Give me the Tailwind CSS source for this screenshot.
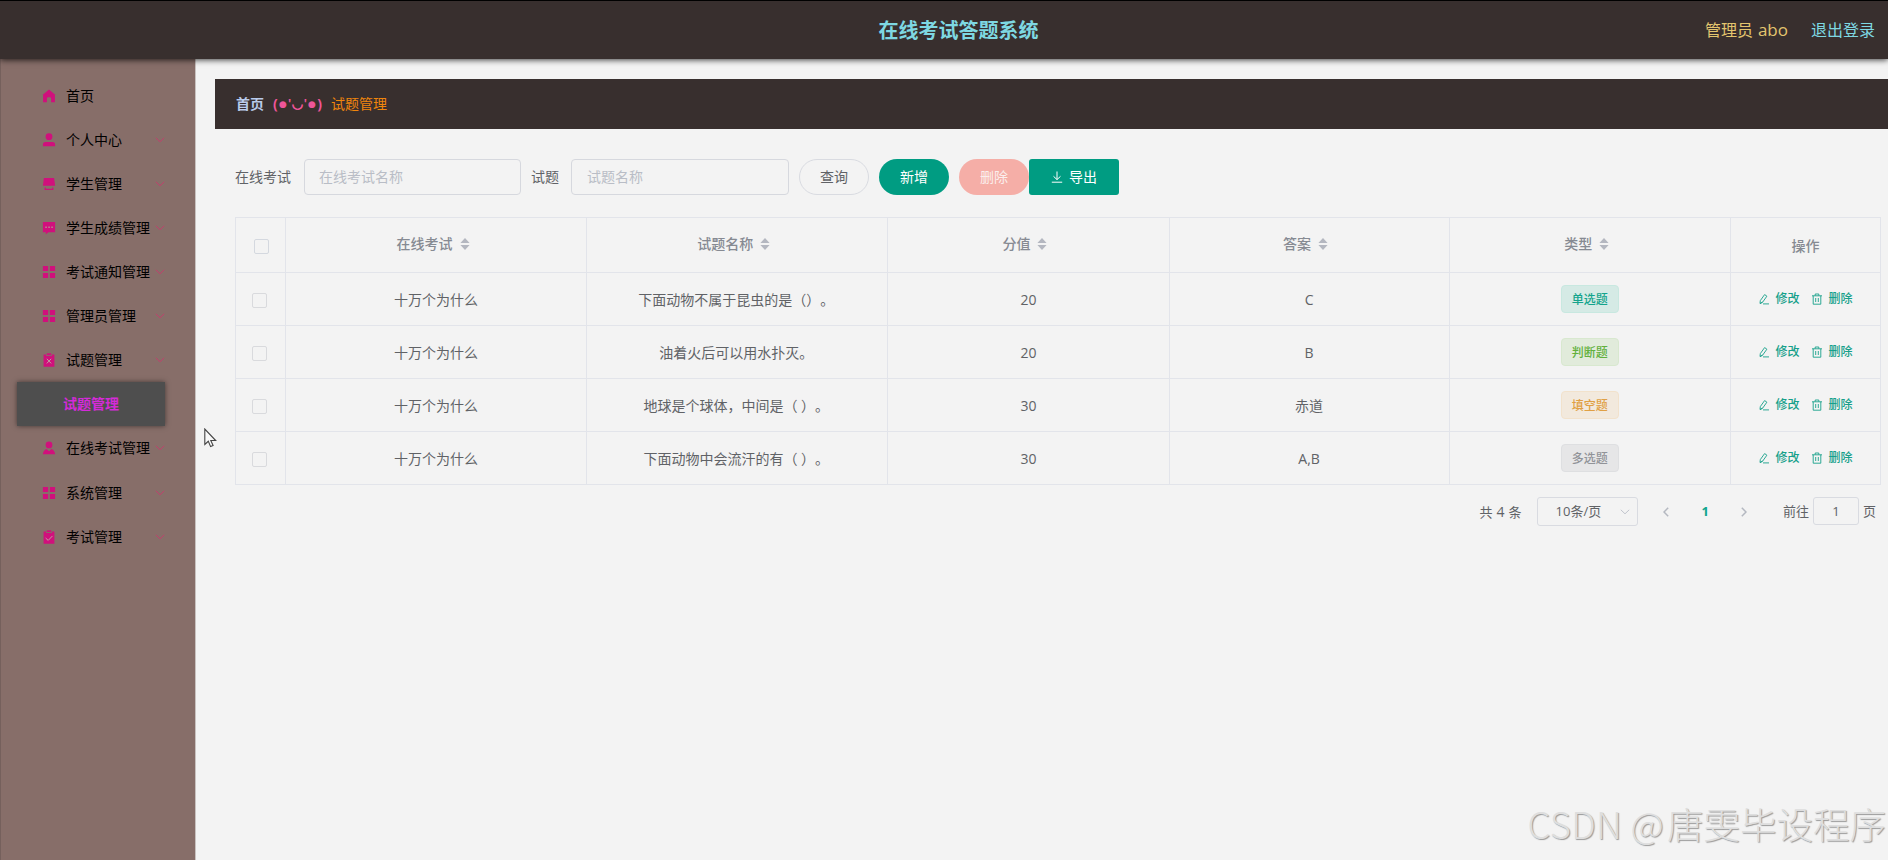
<!DOCTYPE html>
<html lang="zh-CN">
<head>
<meta charset="utf-8">
<title>在线考试答题系统</title>
<script src="https://cdn.jsdelivr.net/npm/@tailwindcss/browser@4"></script>
</head>
<body class="flex h-[860px] w-[1888px] flex-col overflow-hidden bg-[#f3f3f3] font-['Open_Sans','Noto_Sans_CJK_SC',sans-serif] text-sm text-[#606266]">
<svg class="hidden">
  <symbol id="home" viewBox="0 0 14 14"><path fill="currentColor" d="M7 .5.5 5.900h.6v7.400h3.800V9.400q0-1.200 1.200-1.200h1.800q1.200 0 1.200 1.200v3.900h3.800V5.900h.6z"/></symbol>
  <symbol id="user" viewBox="0 0 14 14"><circle cx="7" cy="3.700" r="3.400" fill="currentColor"/><path fill="currentColor" d="M.9 13.300v-1.600q0-2.600 2.600-2.600h7q2.600 0 2.600 2.600v1.600z"/></symbol>
  <symbol id="printer" viewBox="0 0 14 14"><path fill="currentColor" d="M1.900 1h10.200l1 7.800H.9zM2.600 10.400h1.200v1.400h6.400v-1.400h1.200V13H2.600z"/></symbol>
  <symbol id="chat" viewBox="0 0 14 14"><path fill="currentColor" d="M.9 1h12.200v10.200H6.500l-2.700 2.100v-2.100H.9z"/><path fill="#b98a92" d="M3.300 5.400h1.500v1.500H3.300zm3 0h1.500v1.500H6.300zm3 0h1.500v1.500H9.300z"/></symbol>
  <symbol id="menu" viewBox="0 0 14 14"><path fill="currentColor" d="M.9.900h5.200v5.200H.9zm7 0h5.200v5.200H7.900zm-7 7h5.200v5.200H.9zm7 0h5.200v5.200H7.900z"/></symbol>
  <symbol id="clip-x" viewBox="0 0 14 14"><path fill="currentColor" d="M1.600 1.500h2.600v1.400h5.600V1.500h2.600v12.200H1.600z"/><path fill="currentColor" d="M4.800.3h4.400v1.800H4.800z"/><path d="m4.800 5.800 4.400 4.600m0-4.600-4.400 4.600" stroke="#c09ca0" stroke-width="1"/></symbol>
  <symbol id="clip-check" viewBox="0 0 14 14"><path fill="currentColor" d="M1.600 1.500h2.600v1.400h5.600V1.500h2.600v12.200H1.600z"/><path fill="currentColor" d="M4.800.3h4.400v1.800H4.800z"/><path d="m3.600 8 2.600 2.400 4.300-4.500" fill="none" stroke="#c09ca0" stroke-width="1"/></symbol>
  <symbol id="custom" viewBox="0 0 14 14"><circle cx="7" cy="3.900" r="3.400" fill="currentColor"/><path fill="currentColor" d="M.9 13.300c.3-2.700 1.500-4.400 3.600-5.200L7 10.200l2.500-2.100c2.100.8 3.300 2.500 3.600 5.200z"/></symbol>
  <symbol id="down" viewBox="0 0 10 6"><path d="m.8.800 4.200 4 4.200-4" fill="none" stroke="currentColor"/></symbol>
  <symbol id="sort" viewBox="0 0 10 14"><path fill="#b4b7c0" d="M5 1 9.600 6H.4zM5 13 .4 8h9.200z"/></symbol>
  <symbol id="edit" viewBox="0 0 12 12"><path d="M5 10.900h6M2 10.500l.3-2.900 4.300-6 2.300 1.600-4.300 6zM2 10.500l2.600-1.300" fill="none" stroke="currentColor" stroke-width=".9"/></symbol>
  <symbol id="trash" viewBox="0 0 12 12"><path d="M1 2.800h10M4.200 2.600V1h3.600v1.600M2.200 2.800v8.400h7.600V2.800M4.700 5v4M7.300 5v4" fill="none" stroke="currentColor" stroke-width=".9"/></symbol>
</svg>

<header class="relative z-10 flex h-[59px] shrink-0 items-center border-t border-black bg-[#382f2e] pr-[13px] shadow-[0_1px_6px_rgba(0,0,0,0.75)]">
  <div class="w-[500px]"></div>
  <h1 class="flex-1 pl-[29px] pt-[2px] text-center text-xl font-bold leading-[58px] text-[#7ed8e2]">在线考试答题系统</h1>
  <div class="flex w-[487px] justify-end gap-[23px] text-base">
    <span class="leading-6 text-[#e3c56e]">管理员<span class="ml-[5px] text-[17px] leading-none">abo</span></span><span class="text-[#7ed8e2]">退出登录</span>
  </div>
</header>

<div class="flex min-h-0 flex-1">
  <nav class="w-[196px] shrink-0 border-x border-l-[#75605c] border-r-[#c9c2c0] bg-[#876e69] pt-[15px] text-black">
    <div class="flex h-11 items-center pl-[41px]"><svg class="mr-[10px] size-[14px] text-[#d0107c]"><use href="#home"/></svg><span>首页</span></div>
    <div class="flex h-11 items-center pl-[41px] pr-[30px]"><svg class="mr-[10px] size-[14px] shrink-0 text-[#d0107c]"><use href="#user"/></svg><span>个人中心</span><svg class="ml-auto h-[6px] w-[10px] shrink-0 text-[#c0406c]"><use href="#down"/></svg></div>
    <div class="flex h-11 items-center pl-[41px] pr-[30px]"><svg class="mr-[10px] size-[14px] shrink-0 text-[#d0107c]"><use href="#printer"/></svg><span>学生管理</span><svg class="ml-auto h-[6px] w-[10px] shrink-0 text-[#c0406c]"><use href="#down"/></svg></div>
    <div class="flex h-11 items-center pl-[41px] pr-[30px]"><svg class="mr-[10px] size-[14px] shrink-0 text-[#d0107c]"><use href="#chat"/></svg><span>学生成绩管理</span><svg class="ml-auto h-[6px] w-[10px] shrink-0 text-[#c0406c]"><use href="#down"/></svg></div>
    <div class="flex h-11 items-center pl-[41px] pr-[30px]"><svg class="mr-[10px] size-[14px] shrink-0 text-[#d0107c]"><use href="#menu"/></svg><span>考试通知管理</span><svg class="ml-auto h-[6px] w-[10px] shrink-0 text-[#c0406c]"><use href="#down"/></svg></div>
    <div class="flex h-11 items-center pl-[41px] pr-[30px]"><svg class="mr-[10px] size-[14px] shrink-0 text-[#d0107c]"><use href="#menu"/></svg><span>管理员管理</span><svg class="ml-auto h-[6px] w-[10px] shrink-0 text-[#c0406c]"><use href="#down"/></svg></div>
    <div class="flex h-11 items-center pl-[41px] pr-[30px]"><svg class="mr-[10px] size-[14px] shrink-0 text-[#d0107c]"><use href="#clip-x"/></svg><span>试题管理</span><svg class="ml-auto h-[6px] w-[10px] shrink-0 text-[#c0406c]"><use href="#down"/></svg></div>
    <div class="ml-4 flex h-11 w-[148px] items-center bg-[#4e4e4e] pl-[46px] font-bold text-[#d42bd8] shadow-[0_0_5px_rgba(0,0,0,0.5)]">试题管理</div>
    <div class="flex h-11 items-center pl-[41px] pr-[30px]"><svg class="mr-[10px] size-[14px] shrink-0 text-[#d0107c]"><use href="#custom"/></svg><span>在线考试管理</span><svg class="ml-auto h-[6px] w-[10px] shrink-0 text-[#c0406c]"><use href="#down"/></svg></div>
    <div class="flex h-11 items-center pl-[41px] pr-[30px] pt-px"><svg class="mr-[10px] size-[14px] shrink-0 text-[#d0107c]"><use href="#menu"/></svg><span>系统管理</span><svg class="ml-auto h-[6px] w-[10px] shrink-0 text-[#c0406c]"><use href="#down"/></svg></div>
    <div class="flex h-11 items-center pl-[41px] pr-[30px] pt-px"><svg class="mr-[10px] size-[14px] shrink-0 text-[#d0107c]"><use href="#clip-check"/></svg><span>考试管理</span><svg class="ml-auto h-[6px] w-[10px] shrink-0 text-[#c0406c]"><use href="#down"/></svg></div>
  </nav>

  <main class="min-w-0 flex-1 pl-[19px] pt-5">
    <div class="flex h-[50px] items-center bg-[#382f2e] pl-[21px]">
      <span class="font-bold text-[#b9cbec]">首页</span>
      <span class="mx-[9px] flex w-[49px] items-center justify-between whitespace-nowrap font-['DejaVu_Sans'] text-sm font-bold leading-5 text-[#ee5599]"><span class="font-['Open_Sans']">(</span><span class="text-[9px]">●</span><span class="font-['Open_Sans'] text-xs">'</span><span class="text-[13px] [-webkit-text-stroke:0.7px_#ee5599]">◡</span><span class="font-['Open_Sans'] text-xs">'</span><span class="text-[9px]">●</span><span class="font-['Open_Sans']">)</span></span>
      <span class="text-[#f0860c]">试题管理</span>
    </div>

    <div class="mt-[30px] flex h-9 items-center pl-[20px]">
      <span class="w-[69px]">在线考试</span>
      <div class="flex h-9 w-[217px] items-center rounded border border-[#d6d8de] pl-[14px] text-[#b9bdc6]">在线考试名称</div>
      <span class="ml-[10px] w-10">试题</span>
      <div class="flex h-9 w-[218px] items-center rounded border border-[#d6d8de] pl-[15px] text-[#b9bdc6]">试题名称</div>
      <button class="ml-[10px] h-9 w-[70px] rounded-full border border-[#d9dbe1]">查询</button>
      <button class="ml-[10px] h-9 w-[70px] rounded-full bg-[#009c82] text-white">新增</button>
      <button class="ml-[10px] h-9 w-[70px] rounded-full bg-[#f5aea7] text-[#fbeeed]">删除</button>
      <button class="flex h-9 w-[90px] items-center justify-center gap-[6px] rounded-[3px] bg-[#009c82] text-white"><svg class="size-3" viewBox="0 0 12 12" fill="none" stroke="currentColor"><path d="M6 .5v8M2.500 5.300 6 8.600l3.500-3.300M.8 11.200h10.400"/></svg>导出</button>
    </div>

    <table class="ml-[20px] mt-[22px] w-[1646px] table-fixed border-collapse text-center [text-spacing-trim:space-all] [&_td]:border [&_td]:border-[#e2e4ea] [&_td]:p-0 [&_td]:pt-[2px] [&_th]:border [&_th]:border-[#e2e4ea] [&_th]:p-0">
      <colgroup><col class="w-[50px]"><col class="w-[301px]"><col class="w-[301px]"><col class="w-[281px]"><col class="w-[280px]"><col class="w-[281px]"><col class="w-[150px]"></colgroup>
      <thead>
        <tr class="h-[55px] font-bold text-[#868a92]">
          <th><div class="ml-[18px] mt-[2px] size-[15px] rounded-[2px] border border-[#d4d8df]"></div></th>
          <th><div class="mb-[2px] flex items-center justify-center gap-[7px] pr-[6px]"><span class="font-medium">在线考试</span><svg class="h-[14px] w-[10px]"><use href="#sort"/></svg></div></th>
          <th><div class="mb-[2px] flex items-center justify-center gap-[7px] pr-[7px]"><span class="font-medium">试题名称</span><svg class="h-[14px] w-[10px]"><use href="#sort"/></svg></div></th>
          <th><div class="mb-[2px] flex items-center justify-center gap-[7px] pr-[7px]"><span class="font-medium">分值</span><svg class="h-[14px] w-[10px]"><use href="#sort"/></svg></div></th>
          <th><div class="mb-[2px] flex items-center justify-center gap-[7px] pr-[7px]"><span class="font-medium">答案</span><svg class="h-[14px] w-[10px]"><use href="#sort"/></svg></div></th>
          <th><div class="mb-[2px] flex items-center justify-center gap-[7px] pr-[6px]"><span class="font-medium">类型</span><svg class="h-[14px] w-[10px]"><use href="#sort"/></svg></div></th>
          <th><div class="mt-[2px] font-medium">操作</div></th>
        </tr>
      </thead>
      <tbody>
        <tr class="h-[53px]">
          <td><div class="ml-4 size-[15px] rounded-[2px] border border-[#d9dadd]"></div></td><td>十万个为什么</td><td class="pr-[2px]!">下面动物不属于昆虫的是（）。</td><td>20</td><td>C</td>
          <td><div class="mx-auto -mt-[2px] flex h-7 w-[58px] items-center justify-center rounded border border-[#c8e8e0] bg-[#d5eae5] pt-px text-xs font-medium text-[#13a48c]">单选题</div></td>
          <td><div class="mb-[2px] flex items-center justify-center gap-[5px] text-xs font-medium text-[#16a08a]"><svg class="size-3"><use href="#edit"/></svg>修改<svg class="ml-[7px] size-3"><use href="#trash"/></svg>删除</div></td>
        </tr>
        <tr class="h-[53px]">
          <td><div class="ml-4 size-[15px] rounded-[2px] border border-[#d9dadd]"></div></td><td>十万个为什么</td><td class="pr-[2px]!">油着火后可以用水扑灭。</td><td>20</td><td>B</td>
          <td><div class="mx-auto -mt-[2px] flex h-7 w-[58px] items-center justify-center rounded border border-[#d8e8cf] bg-[#e1ebdb] pt-px text-xs font-medium text-[#62b03c]">判断题</div></td>
          <td><div class="mb-[2px] flex items-center justify-center gap-[5px] text-xs font-medium text-[#16a08a]"><svg class="size-3"><use href="#edit"/></svg>修改<svg class="ml-[7px] size-3"><use href="#trash"/></svg>删除</div></td>
        </tr>
        <tr class="h-[53px]">
          <td><div class="ml-4 size-[15px] rounded-[2px] border border-[#d9dadd]"></div></td><td>十万个为什么</td><td class="pr-[2px]!">地球是个球体，中间是（ ）。</td><td>30</td><td>赤道</td>
          <td><div class="mx-auto -mt-[2px] flex h-7 w-[58px] items-center justify-center rounded border border-[#f2e2cc] bg-[#f2e9dd] pt-px text-xs font-medium text-[#e0a044]">填空题</div></td>
          <td><div class="mb-[2px] flex items-center justify-center gap-[5px] text-xs font-medium text-[#16a08a]"><svg class="size-3"><use href="#edit"/></svg>修改<svg class="ml-[7px] size-3"><use href="#trash"/></svg>删除</div></td>
        </tr>
        <tr class="h-[53px]">
          <td><div class="ml-4 size-[15px] rounded-[2px] border border-[#d9dadd]"></div></td><td>十万个为什么</td><td class="pr-[2px]!">下面动物中会流汗的有（ ）。</td><td>30</td><td>A,B</td>
          <td><div class="mx-auto -mt-[2px] flex h-7 w-[58px] items-center justify-center rounded border border-[#dedfe1] bg-[#e6e6e7] pt-px text-xs font-medium text-[#919398]">多选题</div></td>
          <td><div class="mb-[2px] flex items-center justify-center gap-[5px] text-xs font-medium text-[#16a08a]"><svg class="size-3"><use href="#edit"/></svg>修改<svg class="ml-[7px] size-3"><use href="#trash"/></svg>删除</div></td>
        </tr>
      </tbody>
    </table>

    <div class="mt-[12px] flex h-[29px] items-center justify-end pr-3 text-[13px]">
      <span>共<span class="mx-1 text-sm">4</span>条</span>
      <div class="ml-[15px] flex h-[29px] w-[101px] items-center rounded-[3px] border border-[#d9dbe1] pl-[18px] pr-[7px]">10条/页<svg class="ml-auto h-[6px] w-[10px] text-[#c0c4cc]"><use href="#down"/></svg></div>
      <svg class="ml-[25px] h-[10px] w-[6px]" viewBox="0 0 6 10" fill="none" stroke="#b4b8c0" stroke-width="1.500"><path d="M5.200.8 1 5l4.200 4.200"/></svg>
      <span class="ml-[33px] font-bold text-[#10a58d]">1</span>
      <svg class="ml-[32px] h-[10px] w-[6px]" viewBox="0 0 6 10" fill="none" stroke="#b4b8c0" stroke-width="1.500"><path d="M.8.800 5 5 .8 9.200"/></svg>
      <span class="ml-[36px]">前往</span>
      <div class="ml-1 mb-[2px] flex h-7 w-[46px] items-center justify-center rounded-[3px] border border-[#d9dbe1] pt-[2px]">1</div>
      <span class="ml-1">页</span>
    </div>
  </main>
</div>

<svg class="absolute left-[204px] top-[428px] h-[20px] w-[14px]" viewBox="0 0 14 20"><path d="M.8 1v15.500l3.500-3.200 2.300 5.300 2.500-1.100-2.300-5h4.900z" fill="#f8f8f8" stroke="#444" stroke-width="1.100"/></svg>
<div class="absolute right-[2px] top-[797px] whitespace-nowrap font-['Noto_Sans_CJK_SC',sans-serif] text-[36.500px] font-light leading-[54px] text-[#dedede] [text-shadow:1px_1px_1px_#999]"><span class="mr-[3px] tracking-[0.3px]">CSDN @</span>唐雯毕设程序</div>
</body>
</html>
